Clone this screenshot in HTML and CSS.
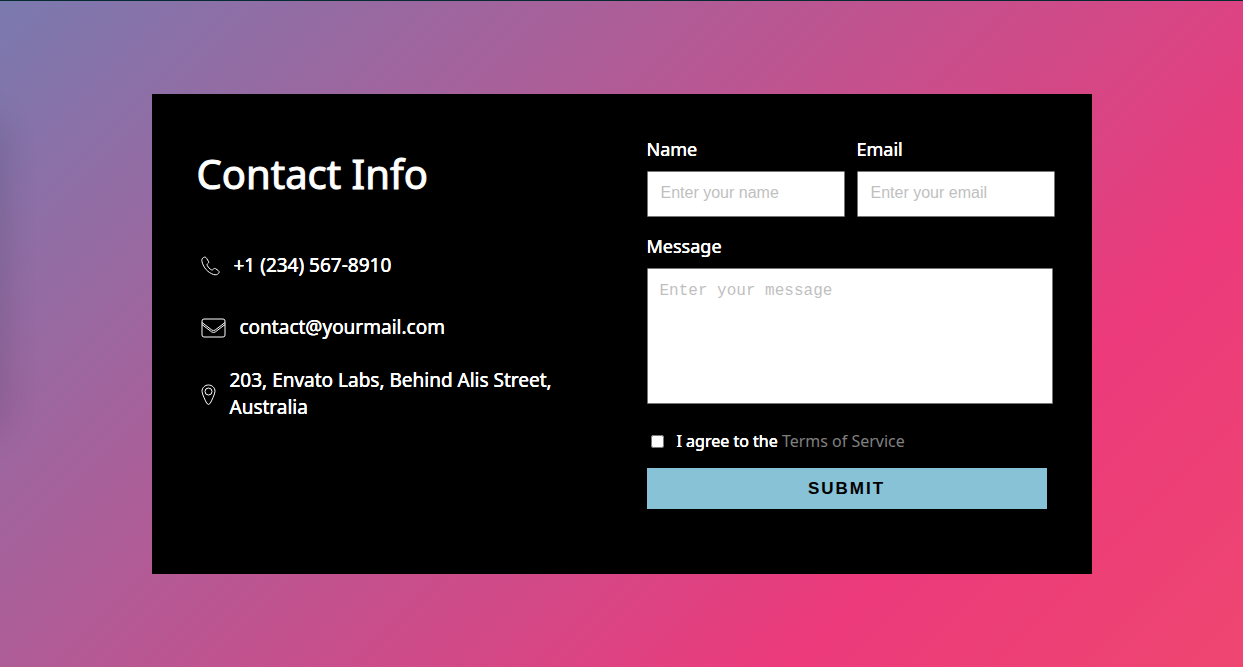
FILE: index.html
```html
<!DOCTYPE html>
<html lang="en">
<head>
<meta charset="utf-8">
<meta name="viewport" content="width=device-width, initial-scale=1">
<title>Contact Info</title>
<link rel="stylesheet" href="styles.css">
</head>
<body class="page">
<main class="card">
  <section class="info">
    <h1 class="title">Contact Info</h1>
    <ul class="contacts">
      <li class="contact contact-phone">
        <svg class="icon" width="19" height="20" viewBox="0 0 19 20" aria-hidden="true"><path d="M2.500 1.500C1 2.300.6 3.800 1 5.600c1.400 6 6 11.200 11.700 12.900 1.900.6 3.700.3 4.900-1.200.8-1 .8-1.900-.3-2.700l-2.400-1.700c-1-.7-1.800-.6-2.600.3-.9 1-1.500 1-2.500.3-1.500-1-2.600-2.200-3.400-3.700-.6-1-.5-1.600.5-2.300 1-.7 1.100-1.400.4-2.400L5.600 2.300C4.700 1 3.800.8 2.500 1.500z"/></svg>
        <span>+1 (234) 567-8910</span>
      </li>
      <li class="contact contact-mail">
        <svg class="icon" width="25" height="20" viewBox="0 0 25 20" aria-hidden="true"><rect x="1" y="1" width="23" height="18" rx="2"/><path d="M1 4.500 10.800 12q1.700 1.200 3.400 0L24 4.500M1 6.500 10.500 13.800q2 1.400 4 0L24 6.500"/></svg>
        <span>contact@yourmail.com</span>
      </li>
      <li class="contact contact-address">
        <svg class="icon" width="15" height="21" viewBox="0 0 15 21" aria-hidden="true"><path d="M7.500 1C3.800 1 1 3.800 1 7.300c0 2.500 3.500 9.700 4.800 12.100q1.700 2 3.400 0C10.500 17 14 9.800 14 7.300 14 3.800 11.200 1 7.500 1z"/><circle cx="7.500" cy="7.500" r="3.500"/></svg>
        <span>203, Envato Labs, Behind Alis Street, Australia</span>
      </li>
    </ul>
  </section>
  <form class="form">
    <div class="row">
      <div class="field">
        <label class="label" for="name">Name</label>
        <input class="input" id="name" type="text" placeholder="Enter your name">
      </div>
      <div class="field">
        <label class="label" for="email">Email</label>
        <input class="input" id="email" type="email" placeholder="Enter your email">
      </div>
    </div>
    <div class="field field-message">
      <label class="label" for="message">Message</label>
      <textarea class="input textarea" id="message" placeholder="Enter your message"></textarea>
    </div>
    <div class="agree">
      <input class="check" id="agree" type="checkbox">
      <label for="agree"><span class="agree-text">I agree to the</span> <a class="terms" href="#">Terms of Service</a></label>
    </div>
    <button class="submit" type="submit">SUBMIT</button>
  </form>
</main>
</body>
</html>
```
FILE: styles.css
```css
* { box-sizing: border-box; }

.page {
  margin: 0;
  min-height: 100vh;
  display: flex;
  align-items: center;
  justify-content: center;
  border-top: 1px solid #062b30;
  background: linear-gradient(135deg, #7a7aaf 0%, #ec3a7b 76%, #ee4671 100%);
  color: #fff;
  font-family: "Noto Sans", sans-serif;
  font-weight: 400;
  overflow-x: hidden;
}

/* soft shade along the left edge */
.page::before {
  content: "";
  position: absolute;
  left: -20px;
  top: 120px;
  width: 20px;
  height: 310px;
  box-shadow: 0 0 36px rgba(0, 0, 0, 0.2);
}

.card {
  width: 100%;
  max-width: 940px;
  min-height: 480px;
  display: grid;
  grid-template-columns: minmax(0, 1fr) 408px;
  column-gap: 72px;
  padding: 43px 37px 64px 45px;
  background: #000;
}

/* thickens the light text slightly on the black card */
.contacts,
.label,
.agree-text {
  text-shadow: 0 0 #fff, 0 0 #fff;
}

.title {
  margin: 9px 0 0;
  font-size: 40px;
  line-height: 56px;
  font-weight: 400;
  -webkit-text-stroke: 1px #fff;
}

.contacts {
  list-style: none;
  margin: 50px 0 0;
  padding: 0 0 0 4px;
  font-size: 19px;
  line-height: 27px;
}

.contact {
  display: flex;
  align-items: center;
  gap: 14px;
}

.contact-mail { margin-top: 35px; }
.contact-address { margin-top: 26px; }

.icon {
  flex: none;
  fill: none;
  stroke: #fff;
  stroke-width: 1;
}

.row {
  display: grid;
  grid-template-columns: 1fr 1fr;
  gap: 12px;
}

.label {
  display: block;
  margin-bottom: 10px;
  font-size: 18px;
  line-height: 24px;
}

.input {
  display: block;
  width: 100%;
  height: 46px;
  padding: 9px 13px 11px;
  border: 1px solid #767676;
  border-radius: 1px;
  background: #fff;
  color: #000;
  font: 16px "Liberation Sans", Arial, sans-serif;
}

.input::placeholder { color: #bfbfbf; }

.field-message {
  margin-top: 17px;
  padding-right: 2px;
}

.textarea {
  height: 136px;
  padding: 13px 12px;
  font: 16px "Liberation Mono", "Courier New", monospace;
  resize: none;
}

.agree {
  display: flex;
  align-items: center;
  gap: 13px;
  margin-top: 25px;
  padding-left: 4px;
  font-size: 16px;
  line-height: 24px;
}

.check {
  width: 13px;
  height: 13px;
  margin: 0;
}

.terms {
  color: #808080;
  text-decoration: none;
}

.submit {
  display: block;
  width: 400px;
  max-width: 100%;
  height: 41px;
  margin-top: 15px;
  padding: 0;
  border: 0;
  background: #88c2d6;
  color: #000;
  font: bold 17px "Liberation Sans", Arial, sans-serif;
  letter-spacing: 2px;
}

@media (max-width: 900px) {
  .card {
    grid-template-columns: minmax(0, 1fr);
    row-gap: 40px;
  }
}
```
